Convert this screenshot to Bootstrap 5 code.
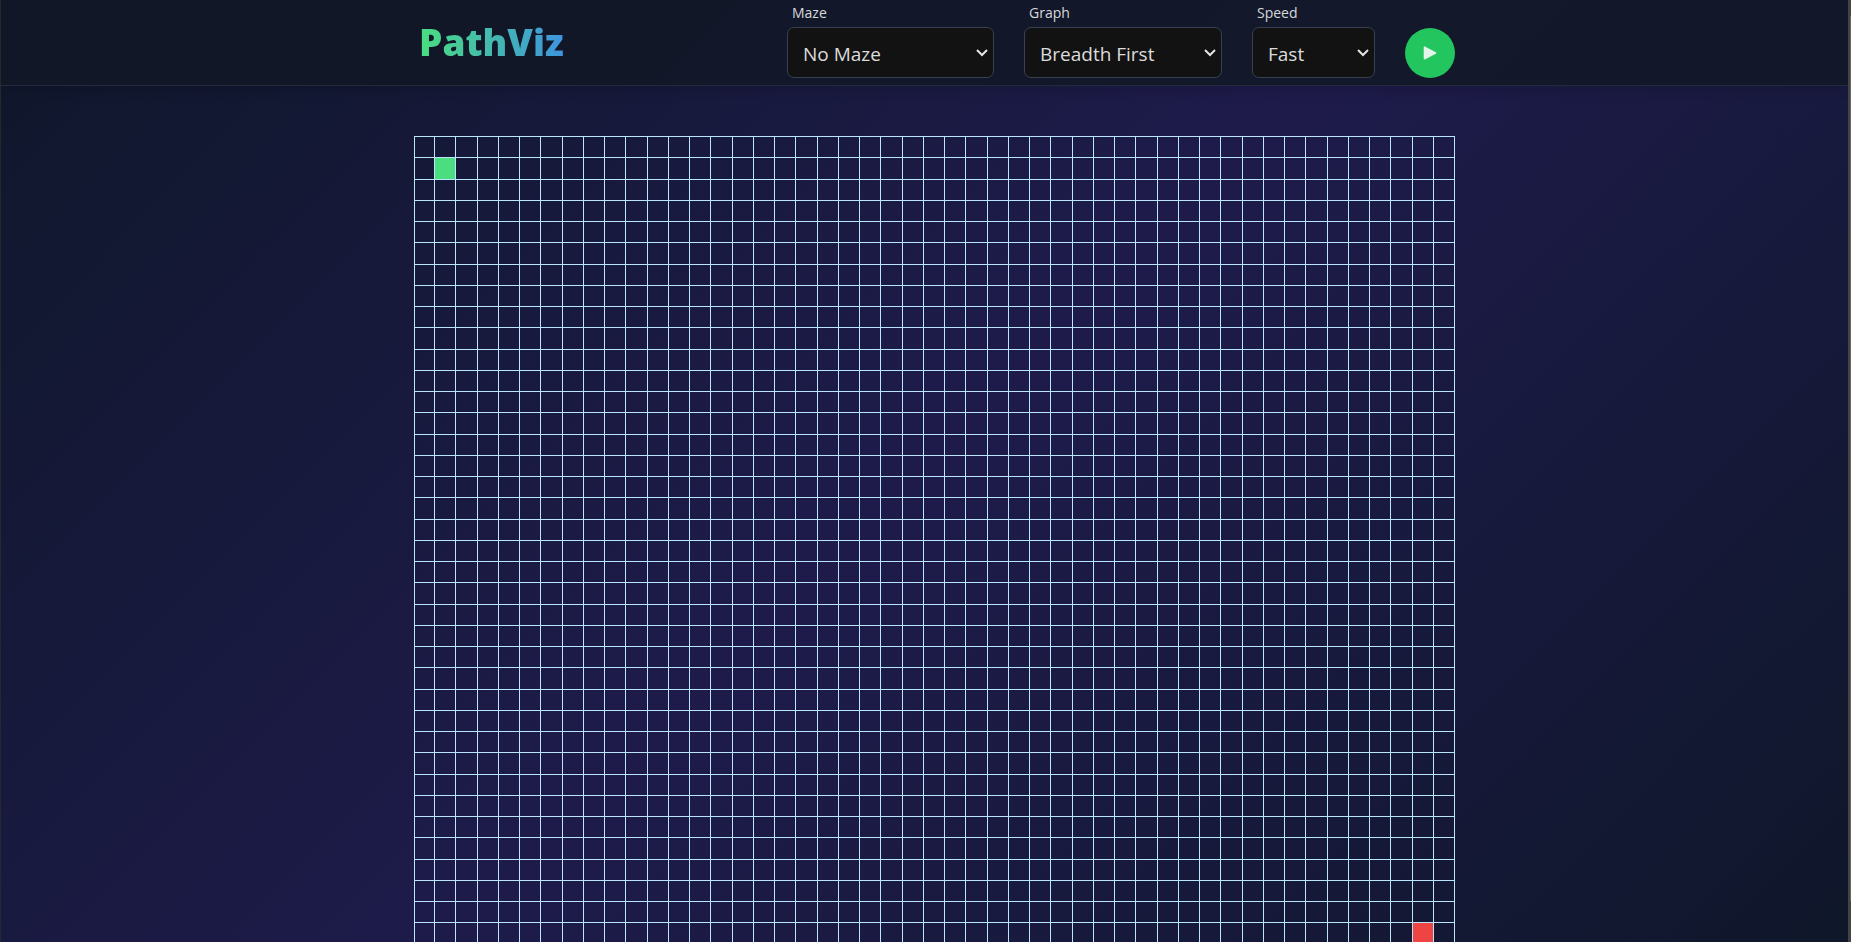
<!DOCTYPE html>
<html lang="en">
<head>
<meta charset="utf-8">
<meta name="viewport" content="width=device-width, initial-scale=1">
<title>PathViz</title>
<link rel="stylesheet" href="https://cdn.jsdelivr.net/npm/bootstrap@5.3.0/dist/css/bootstrap.min.css">
<style>
  body {
    font-family: "Open Sans", "Noto Sans", sans-serif;
    color: #d6d8dc;
    background: linear-gradient(135deg, #0f172a 0%, #1e1b4b 50%, #0f172a 100%);
    border-left: 1px solid #27282c;
    border-right: 3px solid #444342;
  }
  .page-width { max-width: 1041px; }
  .top-bar {
    background: rgba(18, 24, 38, .85);
    border-bottom: 1px solid #252a3a;
    box-shadow: 0 4px 12px rgba(0, 0, 0, .15);
    padding-left: 20px;
  }
  .board-area { padding: 50px 0 0 20px; }
  .logo {
    font-size: 37px;
    line-height: 48px;
    font-weight: 800;
    margin: 0 0 2px 5px;
    background: linear-gradient(90deg, #4ade80, #3b82f6 125%);
    -webkit-background-clip: text;
    background-clip: text;
    color: transparent;
  }
  .controls { gap: 30px; padding-bottom: 7px; }
  .field-label { font-size: 14px; line-height: 20px; padding: 3px 0 4px 5px; }
  .picker {
    height: 51px;
    padding: 4px 32px 0 15px;
    font-size: 19px;
    color: #dcdcdc;
    background-color: #121212;
    background-image: url("data:image/svg+xml,%3Csvg xmlns='http://www.w3.org/2000/svg' viewBox='0 0 12 8'%3E%3Cpath d='M1 1l5 5 5-5' fill='none' stroke='%23e4e4e4' stroke-width='2'/%3E%3C/svg%3E");
    background-size: 12px 8px;
    background-position: right 5px center;
    border: 1px solid #374151;
    border-radius: 7px;
  }
  .picker-maze { width: 207px; }
  .picker-graph { width: 198px; }
  .picker-speed { width: 123px; }
  .play { width: 50px; height: 50px; background: #22c55e; }
  .play:hover { background: #16a34a; }
  .board {
    display: grid;
    grid-template-columns: repeat(49, minmax(0, 1fr));
    grid-template-rows: repeat(39, minmax(0, 1fr));
    aspect-ratio: 1041 / 829;
  }
  .cell { border: solid #bae6fd; border-width: 1px 1px 0 0; }
  .cell:nth-child(49n + 1) { border-left-width: 1px; }
  .cell-start { background: #4ade80; }
  .cell-goal { background: #ef4444; }
  .scroll-thumb { width: 1px; top: 16px; bottom: 41px; right: 0; background: #666; }
</style>
</head>
<body class="vh-100 overflow-hidden">
<header class="top-bar">
  <div class="page-width mx-auto d-flex justify-content-between align-items-center">
    <h1 class="logo">PathViz</h1>
    <form class="controls d-flex align-items-end">
      <div>
        <label class="field-label d-block" for="maze">Maze</label>
        <select class="form-select picker picker-maze" id="maze"><option>No Maze</option><option>Binary Tree</option><option>Recursive Division</option></select>
      </div>
      <div>
        <label class="field-label d-block" for="graph">Graph</label>
        <select class="form-select picker picker-graph" id="graph"><option>Breadth First</option><option>Depth First</option><option>Dijkstra</option><option>A-Star</option></select>
      </div>
      <div>
        <label class="field-label d-block" for="speed">Speed</label>
        <select class="form-select picker picker-speed" id="speed"><option>Fast</option><option>Medium</option><option>Slow</option></select>
      </div>
      <button class="play btn border-0 rounded-circle p-0 d-flex align-items-center justify-content-center" type="button" aria-label="Play">
        <svg width="14" height="16" viewBox="0 0 14 16" aria-hidden="true"><path d="M1.5 2.2v11.6L12.5 8z" fill="#e2f6e9" stroke="#e2f6e9" stroke-width="1.6" stroke-linejoin="round"/></svg>
      </button>
    </form>
  </div>
</header>
<main class="board-area">
  <div class="page-width mx-auto">
    <div class="board" id="board"></div>
  </div>
</main>
<div class="scroll-thumb position-fixed"></div>
<script>
  const COLS = 49, ROWS = 39;
  const board = document.getElementById("board");
  for (let r = 0; r < ROWS; r++) {
    for (let c = 0; c < COLS; c++) {
      const cell = document.createElement("div");
      cell.className = "cell";
      if (r === 1 && c === 1) cell.classList.add("cell-start");
      if (r === ROWS - 2 && c === COLS - 2) cell.classList.add("cell-goal");
      board.append(cell);
    }
  }
</script>
<script src="https://cdn.jsdelivr.net/npm/bootstrap@5.3.0/dist/js/bootstrap.bundle.min.js"></script>
</body>
</html>
